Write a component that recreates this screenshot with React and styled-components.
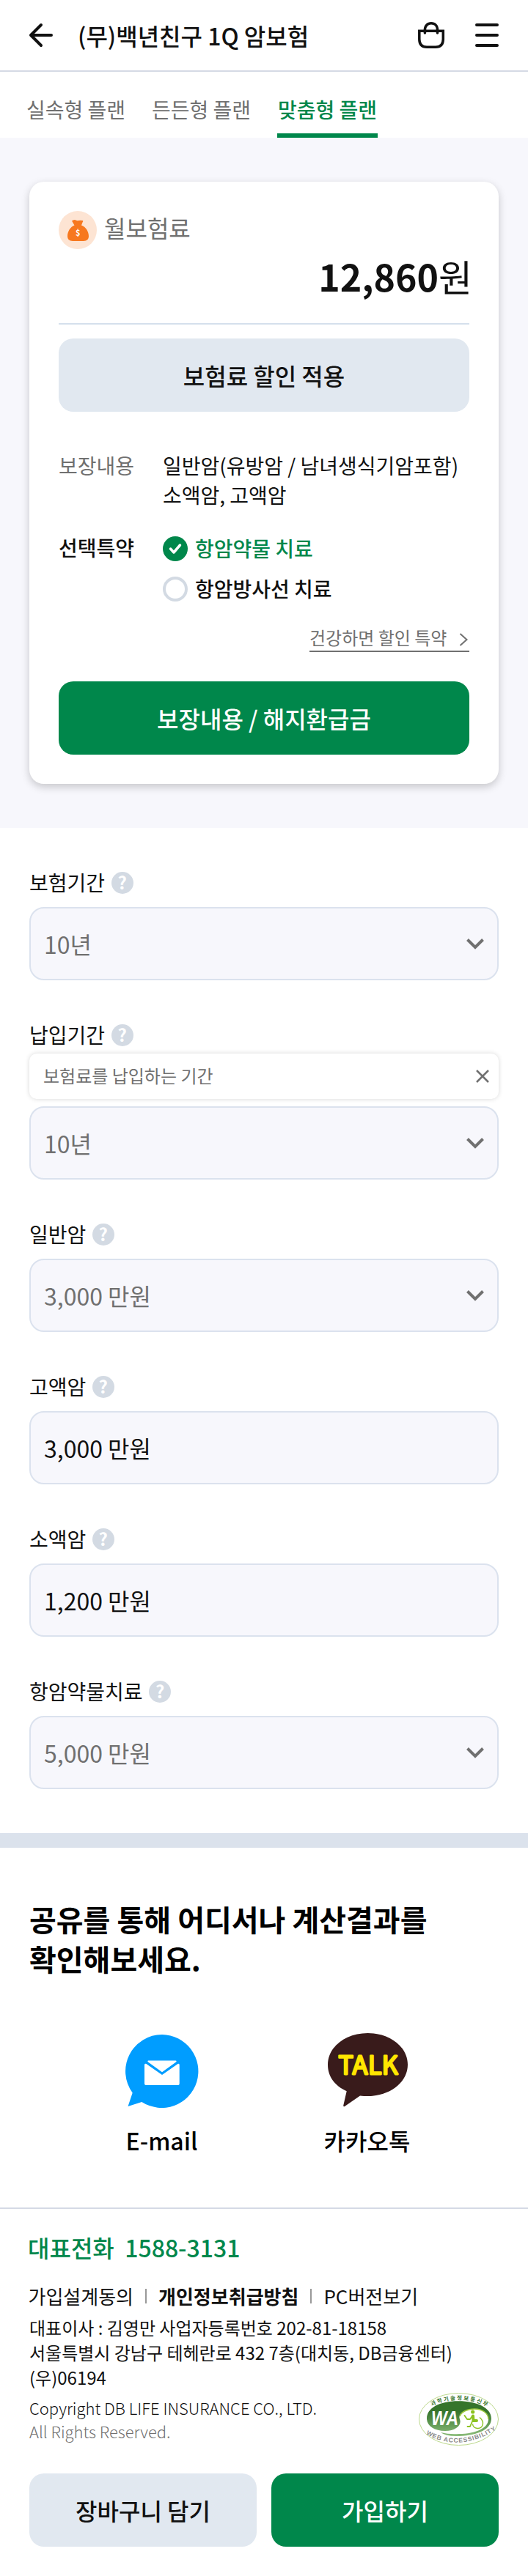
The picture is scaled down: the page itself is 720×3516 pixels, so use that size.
import React from "react";
import styled, { createGlobalStyle } from "styled-components";

const Global = createGlobalStyle`
  * { box-sizing: border-box; }
  body { margin: 0; background: #fff; color: #111; font-family: "Noto Sans CJK KR", "Noto Sans", sans-serif; font-size: 28px; }
  button, input { font: inherit; color: inherit; }
  h1, h2, p, dl, dd, dt { margin: 0; font-weight: inherit; }
  svg { display: block; flex: none; overflow: visible; }
`;

const Page = styled.div`
  width: 720px;
  height: 3516px;
  overflow: hidden;
  background: #fff;
`;
const Header = styled.header`
  height: 98px;
  padding: 0 40px;
  display: flex;
  align-items: center;
  border-bottom: 2px solid #d5dae5;
`;
const Title = styled.h1`
  flex: 1;
  margin-left: 34px;
  font-size: 32px;
  font-weight: 500;
  line-height: 48px;
`;
const HeaderIcons = styled.div`
  display: flex;
  align-items: center;
  gap: 41px;
`;
const Tabs = styled.nav`
  height: 90px;
  padding-left: 35px;
  display: flex;
  gap: 34px;
`;
const Tab = styled.a`
  width: 137px;
  height: 90px;
  margin-left: ${(p) => (p.$active ? 1 : 0)}px;
  padding-top: 30px;
  line-height: 42px;
  font-size: 28px;
  text-align: center;
  white-space: pre;
  font-weight: ${(p) => (p.$active ? 500 : 400)};
  color: ${(p) => (p.$active ? "#00874b" : "#707070")};
  border-bottom: 6px solid ${(p) => (p.$active ? "#00874b" : "transparent")};
`;
const Summary = styled.section`
  height: 942px;
  padding: 60px 40px;
  background: #f7f7fc;
`;
const Card = styled.div`
  height: 822px;
  padding: 40px;
  border-radius: 20px;
  background: #fff;
  box-shadow: 0 4px 12px rgba(0, 0, 0, 0.2);
`;
const PremiumLabel = styled.div`
  height: 52px;
  display: flex;
  align-items: center;
  gap: 10px;
  font-size: 32px;
  line-height: 48px;
  color: #707070;
  span { margin-bottom: 8px; }
`;
const Premium = styled.div`
  height: 103px;
  margin-right: -4px;
  text-align: right;
  font-size: 50px;
  line-height: 73px;
  b { font-weight: 700; }
`;
const Rule = styled.hr`
  height: 2px;
  margin: -2px 0 0;
  border: 0;
  background: #d5e0ec;
`;
const Button = styled.button`
  display: block;
  flex: 1;
  width: 100%;
  height: 100px;
  padding: 0;
  border: 0;
  border-radius: 20px;
  font-size: 32px;
  font-weight: 500;
  color: ${(p) => (p.$primary ? "#fff" : "#111")};
  background: ${(p) => (p.$primary ? "#00874b" : "#e1e8f0")};
`;
const DiscountButton = styled(Button)`
  margin-top: 19px;
`;
const Details = styled.dl`
  margin-top: 53px;
  display: grid;
  grid-template-columns: 142px 1fr;
  row-gap: 34px;
  font-size: 28px;
  line-height: 40px;
  white-space: nowrap;
`;
const Term = styled.dt`
  font-weight: ${(p) => (p.$strong ? 500 : 400)};
  line-height: ${(p) => (p.$strong ? 37 : 40)}px;
  color: ${(p) => (p.$strong ? "#111" : "#707070")};
`;
const Options = styled.dd`
  display: flex;
  flex-direction: column;
  gap: 15px;
`;
const Option = styled.div`
  height: 40px;
  display: flex;
  align-items: center;
  gap: 10px;
  font-weight: 500;
  color: ${(p) => (p.$checked ? "#00874b" : "#111")};
`;
const OptionText = styled.span`
  margin-bottom: 3px;
`;
const Radio = styled.span`
  width: 34px;
  height: 34px;
  display: grid;
  place-items: center;
  border-radius: 50%;
  border: ${(p) => (p.$checked ? "0" : "4px solid #d3dae3")};
  background: ${(p) => (p.$checked ? "#00874b" : "#fff")};
`;
const LinkRow = styled.div`
  margin-top: 28px;
  display: flex;
  justify-content: flex-end;
`;
const TermsLink = styled.a`
  width: 218px;
  height: 38px;
  padding-right: 2px;
  display: flex;
  justify-content: space-between;
  align-items: center;
  border-bottom: 2px solid #707070;
  font-size: 24px;
  line-height: 36px;
  color: #707070;
  svg { margin-top: 5px; }
`;
const CoverageButton = styled(Button)`
  margin-top: 39.5px;
`;
const Form = styled.form`
  height: 1372px;
  padding: 60px 40px;
  display: flex;
  flex-direction: column;
  gap: 60px;
`;
const FieldLabel = styled.label`
  height: 30px;
  display: flex;
  align-items: center;
  gap: 8.5px;
  line-height: 42px;
  font-size: 28px;
`;
const LabelText = styled.span`
  margin-top: -2px;
`;
const Help = styled.span`
  width: 30px;
  height: 30px;
  border-radius: 50%;
  background: #d3dae3;
  color: #fff;
  text-align: center;
  font-size: 24px;
  font-weight: 700;
  line-height: 28px;
`;
const Control = styled.div`
  height: 100px;
  margin-top: ${(p) => (p.$tight ? 10 : 18)}px;
  padding: 0 18px;
  display: flex;
  justify-content: space-between;
  align-items: center;
  border: 2px solid #dbe2ee;
  border-radius: 20px;
  background: #f7f7fc;
  font-size: 32px;
  color: ${(p) => (p.$select ? "#707070" : "#111")};
`;
const Tooltip = styled.div`
  height: 62px;
  margin-top: 10px;
  padding: 0 13px 0 19px;
  display: flex;
  justify-content: space-between;
  align-items: center;
  border-radius: 10px;
  background: #fff;
  box-shadow: 0 0 6px rgba(0, 0, 0, 0.16);
  font-size: 24px;
  color: #707070;
  span { margin-bottom: 3px; }
`;
const Share = styled.section`
  height: 513px;
  padding: 70px 40px 0;
  border-top: 20px solid #dbe2ec;
  border-bottom: 2px solid #d5dae5;
`;
const ShareTitle = styled.h2`
  font-size: 40px;
  font-weight: 700;
  line-height: 54px;
  color: #000;
`;
const ShareList = styled.div`
  margin-top: 75px;
  padding-left: 41px;
  display: flex;
`;
const ShareItem = styled.a`
  width: 280px;
  display: flex;
  flex-direction: column;
  align-items: center;
  font-size: 32px;
  font-weight: 500;
  line-height: 48px;
  color: #000;
  gap: 20px;
  span { margin-left: -1px; }
`;
const Footer = styled.footer`
  padding: 28px 40px 40px;
`;
const Phone = styled.p`
  margin-left: -2px;
  color: #00874b;
  font-size: 32px;
  font-weight: 500;
  line-height: 48px;
  white-space: pre;
`;
const FooterLinks = styled.div`
  margin: 23px 0 0 -1.5px;
  display: flex;
  align-items: center;
  font-size: 26px;
  line-height: 40px;
  white-space: nowrap;
  b { font-weight: 700; }
`;
const Divider = styled.i`
  width: 2px;
  height: 20px;
  margin: 0 16px;
  background: #999;
`;
const Address = styled.p`
  margin-top: 6px;
  font-size: 24px;
  line-height: 34px;
`;
const CopyRow = styled.div`
  margin-top: 4px;
  height: 72px;
  display: flex;
  justify-content: space-between;
`;
const Copyright = styled.p`
  padding-top: 4px;
  font-size: 22px;
  font-weight: 300;
  line-height: 32px;
  span { color: #707070; }
`;
const Actions = styled.div`
  margin-top: 38px;
  display: flex;
  gap: 20px;
`;

const Chevron = () => (
  <svg width="24" height="16" viewBox="0 0 24 16" fill="none" stroke="#707070" strokeWidth="4">
    <path d="M1.500 2.500 12 13 22.500 2.500" />
  </svg>
);

const MoneyBag = () => (
  <svg width="52" height="52" viewBox="0 0 52 52">
    <circle cx="26" cy="26" r="26" fill="#fde4d3" />
    <path fill="#f7781f" d="M18 13.500Q19.500 12 22 12Q24.500 13.500 27 13Q30 12.500 32.500 13Q34 13.500 32.500 15.500L31 19.500C37 21.500 41 28 41 34.500Q41 41 34 41H19Q12 41 12 34.500C12 28 16 21.500 21.500 19.500Z" />
    <text x="26.300" y="33.500" textAnchor="middle" fontSize="11" fontWeight="700" fill="#fff">$</text>
  </svg>
);

const Mail = () => (
  <svg width="100" height="102" viewBox="0 0 100 102">
    <path fill="#009dff" d="M50 2a50 50 0 1 1-27.700 92L3.500 100 9.700 81.500A50 50 0 0 1 50 2Z" />
    <path fill="#fff" d="M31 37.500H68.500Q70.500 38 69 39.500L50 53.300 31 39.500Q29.500 38 31 37.500ZM26 43.500Q26 41 28.500 42L50 57 71.500 42Q73.700 41 73.700 43.500V69Q73.700 71 72 71H28Q26 71 26 69Z" />
  </svg>
);

const Talk = () => (
  <svg width="109" height="102" viewBox="0 0 109 102">
    <path fill="#391b1b" d="M54.500 0C85 0 109 19 109 43S85 86 54.500 86Q49 86 44 85.500L23 100Q21 101 21.300 98.500L25.700 79.300C10 72 0 60 0 43C0 19 24 0 54.500 0Z" />
    <text x="14.500" y="56.300" fontSize="34" fontWeight="350" textLength="81" fill="#ffe600" stroke="#ffe600" strokeWidth="2.800" strokeLinejoin="round">TALK</text>
  </svg>
);

const AccessibilityMark = () => (
  <svg width="109" height="72" viewBox="0 0 109 72">
    <defs>
      <linearGradient id="mark" x1="0" y1="0" x2="0" y2="1">
        <stop offset="0.300" stopColor="#36752c" />
        <stop offset="1" stopColor="#8cbd7b" />
      </linearGradient>
      <path id="top" d="M16 19Q54.500 0 94 19" />
      <path id="bottom" d="M9 56Q55 82 104 51" />
    </defs>
    <ellipse cx="54.500" cy="36" rx="54" ry="35.500" fill="#fff" stroke="#bcd98c" />
    <path fill="url(#mark)" d="M54 11.300C80 11.300 99 21 99 35C99 51 78 59 51 59Q36 59 30 54Q42 57 55 56C78 56 95 48 95 36C95 27 86 22 75 22C62 22 53 29 56 36C59 44 51 52 36 52C21 52 11 45 11 35C11 21 28 11.300 54 11.300Z" />
    <path fill="none" stroke="#9bc93b" strokeWidth="1.500" d="M56 32C58 26 66 22 76 22C87 22 95 28 95 36" />
    <text x="17" y="44" fontFamily="Liberation Sans" fontSize="27" fontWeight="700" fontStyle="italic" textLength="37" lengthAdjust="spacingAndGlyphs" fill="#fff">WA</text>
    <circle cx="73.700" cy="26" r="2.600" fill="#8cc220" />
    <path fill="none" stroke="#8cc220" strokeWidth="4" strokeLinecap="round" strokeLinejoin="round" d="M74 31.500 74.500 38H79" />
    <path fill="none" stroke="#8cc220" strokeWidth="1.800" strokeLinecap="round" strokeLinejoin="round" d="M73 31.500 70 36H66L62.500 31M73 39 70 46H66.500" />
    <path fill="none" stroke="#8cc220" strokeWidth="1.400" d="M83 33.500C91 40 87 49 80 48.500Q74 48 73.500 42.500" />
    <text fontSize="7.500" fontWeight="700" fill="#36752c"><textPath href="#top" startOffset="2" textLength="78">과학기술정보통신부</textPath></text>
    <text fontFamily="Liberation Sans" fontSize="8.500" fontWeight="700" fill="#888"><textPath href="#bottom" startOffset="1" textLength="101">WEB ACCESSIBILITY</textPath></text>
  </svg>
);

function Field({ label, value, select, hint }) {
  return (
    <div>
      <FieldLabel><LabelText>{label}</LabelText><Help>?</Help></FieldLabel>
      {hint && (
        <Tooltip>
          <span>{hint}</span>
          <svg width="18" height="18" viewBox="0 0 18 18" stroke="#707070" strokeWidth="2.500"><path d="M1 1 17 17M17 1 1 17" /></svg>
        </Tooltip>
      )}
      <Control $select={select} $tight={!!hint}>{value}{select && <Chevron />}</Control>
    </div>
  );
}

const fields = [
  { label: "보험기간", value: "10년", select: true },
  { label: "납입기간", value: "10년", select: true, hint: "보험료를 납입하는 기간" },
  { label: "일반암", value: "3,000 만원", select: true },
  { label: "고액암", value: "3,000 만원" },
  { label: "소액암", value: "1,200 만원" },
  { label: "항암약물치료", value: "5,000 만원", select: true },
];

export default function App() {
  return (
    <Page>
      <Global />
      <Header>
        <svg width="32" height="32" viewBox="0 0 32 32" fill="none" stroke="#111" strokeWidth="4" strokeLinecap="round" strokeLinejoin="round">
          <path d="M16 2 2 16 16 30M2 16H30" />
        </svg>
        <Title>(무)백년친구 1Q 암보험</Title>
        <HeaderIcons>
          <svg width="37" height="36" viewBox="0 0 37 36" fill="none" stroke="#111" strokeWidth="3.500">
            <path d="M1.800 12.200H34.300V23.500Q34.300 34.200 24 34.200H12Q1.800 34.200 1.800 23.500Z" />
            <path strokeLinecap="round" d="M9.400 15V11C9.400 5 13 1.800 18 1.800S26.500 5 26.500 11V15" />
          </svg>
          <svg width="32" height="32" viewBox="0 0 32 32" stroke="#111" strokeWidth="4" strokeLinecap="round">
            <path d="M2 2H30M2 16H30M2 30H30" />
          </svg>
        </HeaderIcons>
      </Header>
      <Tabs>
        <Tab>실속형 플랜</Tab>
        <Tab>든든형 플랜</Tab>
        <Tab $active>맞춤형 플랜</Tab>
      </Tabs>
      <Summary>
        <Card>
          <PremiumLabel><MoneyBag /><span>월보험료</span></PremiumLabel>
          <Premium><b>12,860</b>원</Premium>
          <Rule />
          <DiscountButton>보험료 할인 적용</DiscountButton>
          <Details>
            <Term>보장내용</Term>
            <dd>일반암(유방암 / 남녀생식기암포함)<br />소액암, 고액암</dd>
            <Term $strong>선택특약</Term>
            <Options>
              <Option $checked>
                <Radio $checked>
                  <svg width="18" height="16" viewBox="0 0 18 16" fill="none" stroke="#fff" strokeWidth="3.500" strokeLinecap="round" strokeLinejoin="round"><path d="M2.500 8 7 13 15.500 3" /></svg>
                </Radio>
                <OptionText>항암약물 치료</OptionText>
              </Option>
              <Option><Radio /><OptionText>항암방사선 치료</OptionText></Option>
            </Options>
          </Details>
          <LinkRow>
            <TermsLink>
              건강하면 할인 특약
              <svg width="12" height="18" viewBox="0 0 12 18" fill="none" stroke="#707070" strokeWidth="2"><path d="M1.500 1 10.500 9 1.500 17" /></svg>
            </TermsLink>
          </LinkRow>
          <CoverageButton $primary>보장내용 / 해지환급금</CoverageButton>
        </Card>
      </Summary>
      <Form>{fields.map((f) => <Field key={f.label} {...f} />)}</Form>
      <Share>
        <ShareTitle>공유를 통해 어디서나 계산결과를<br />확인해보세요.</ShareTitle>
        <ShareList>
          <ShareItem><Mail /><span>E-mail</span></ShareItem>
          <ShareItem><Talk /><span>카카오톡</span></ShareItem>
        </ShareList>
      </Share>
      <Footer>
        <Phone>대표전화  1588-3131</Phone>
        <FooterLinks>
          <span>가입설계동의</span><Divider /><b>개인정보취급방침</b><Divider /><span>PC버전보기</span>
        </FooterLinks>
        <Address>
          대표이사 : 김영만 사업자등록번호 202-81-18158<br />
          서울특별시 강남구 테헤란로 432 7층(대치동, DB금융센터)<br />
          (우)06194
        </Address>
        <CopyRow>
          <Copyright>Copyright DB LIFE INSURANCE CO., LTD.<br /><span>All Rights Reserved.</span></Copyright>
          <AccessibilityMark />
        </CopyRow>
        <Actions>
          <Button>장바구니 담기</Button>
          <Button $primary>가입하기</Button>
        </Actions>
      </Footer>
    </Page>
  );
}
